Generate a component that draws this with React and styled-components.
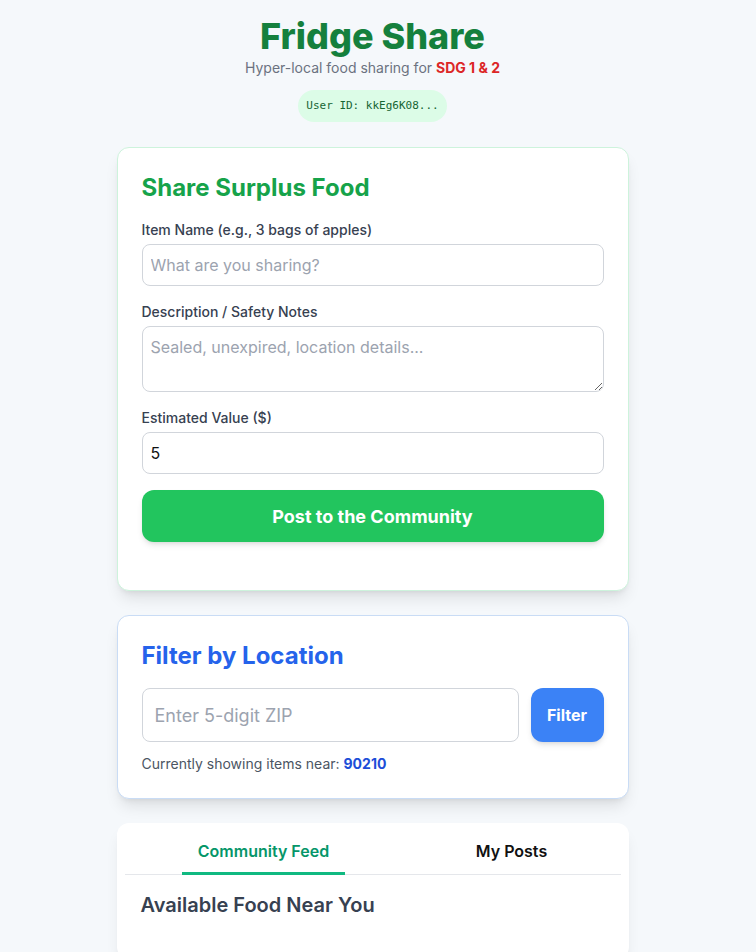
import React, { useState } from 'react';
import styled, { createGlobalStyle } from 'styled-components';

const GlobalStyle = createGlobalStyle`
    * { box-sizing: border-box; }
    body {
        margin: 0;
        background: #f5f8fb;
        font-family: Inter, 'Noto Sans', sans-serif;
        color: #1f2937;
    }
`

const App = () => {
    const [tab, setTab] = useState('feed');
    const [value, setValue] = useState('5');

    return (
    <Viewport>
        <GlobalStyle />
        <Page>
            <Header>
                <Title>Fridge Share</Title>
                <Subtitle>Hyper-local food sharing for <Sdg>SDG 1 &amp; 2</Sdg></Subtitle>
                <UserBadge>User ID: kkEg6K08...</UserBadge>
            </Header>

            <Card tone="green">
                <CardTitle color="#16a34a">Share Surplus Food</CardTitle>
                <Form onSubmit={e => e.preventDefault()}>
                    <Field>
                        <Label>Item Name (e.g., 3 bags of apples)</Label>
                        <Input placeholder="What are you sharing?" />
                    </Field>
                    <Field>
                        <Label>Description / Safety Notes</Label>
                        <TextArea rows={2} placeholder="Sealed, unexpired, location details..." />
                    </Field>
                    <Field>
                        <Label>Estimated Value ($)</Label>
                        <Input type="number" value={value} onChange={e => setValue(e.target.value)} />
                    </Field>
                    <PostButton type="submit">Post to the Community</PostButton>
                </Form>
            </Card>

            <Card tone="blue">
                <CardTitle color="#2563eb">Filter by Location</CardTitle>
                <FilterRow>
                    <ZipInput placeholder="Enter 5-digit ZIP" />
                    <FilterButton>Filter</FilterButton>
                </FilterRow>
                <NearText>Currently showing items near: <Zip>90210</Zip></NearText>
            </Card>

            <FeedCard>
                <Tabs>
                    <Tab active={tab === 'feed'} onClick={() => setTab('feed')}>Community Feed</Tab>
                    <Tab active={tab === 'mine'} onClick={() => setTab('mine')}>My Posts</Tab>
                </Tabs>
                <FeedBody>
                    <FeedTitle>Available Food Near You</FeedTitle>
                </FeedBody>
            </FeedCard>
        </Page>
    </Viewport>
    )
}

const Viewport = styled.div`
    padding-right: 11px;
`

const Page = styled.div`
    max-width: 512px;
    margin: 0 auto;
    padding: 16px 0 40px;
    display: flex;
    flex-direction: column;
    gap: 24px;
`

const Header = styled.header`
    display: flex;
    flex-direction: column;
    align-items: center;
    margin-bottom: 1px;
`

const Title = styled.h1`
    margin: 0;
    font-size: 36px;
    line-height: 40px;
    font-weight: 800;
    color: #15803d;
`

const Subtitle = styled.p`
    margin: 2px 0 0;
    font-size: 14px;
    line-height: 20px;
    color: #6b7280;
`

const Sdg = styled.span`
    color: #dc2626;
    font-weight: 700;
`

const UserBadge = styled.div`
    margin-top: 12px;
    padding: 8px 8px;
    border-radius: 9999px;
    background: #dcfce7;
    color: #166534;
    font-family: 'DejaVu Sans Mono', 'Liberation Mono', monospace;
    font-size: 11px;
    line-height: 16px;
`

const Card = styled.section`
    background: #fff;
    border-radius: 12px;
    border: 1px solid ${p => p.tone === 'blue' ? '#c9dcf5' : '#cdf3dc'};
    box-shadow: 0 10px 15px -3px rgba(0,0,0,0.1), 0 4px 6px -4px rgba(0,0,0,0.1);
    padding: 24px 24px ${p => p.tone === 'blue' ? '24px' : '48px'};
`

const CardTitle = styled.h2`
    margin: 0 0 16px;
    font-size: 24px;
    line-height: 32px;
    font-weight: 700;
    color: ${p => p.color};
`

const Form = styled.form`
    display: flex;
    flex-direction: column;
    gap: 16px;
`

const Field = styled.div`
    display: flex;
    flex-direction: column;
    gap: 4px;
`

const Label = styled.label`
    font-size: 14px;
    line-height: 20px;
    font-weight: 500;
    color: #374151;
`

const Input = styled.input`
    width: 100%;
    height: 42px;
    padding: 8px;
    border: 1px solid #d1d5db;
    border-radius: 8px;
    font-family: inherit;
    font-size: 16px;
    color: #111;
    outline: none;
    &::placeholder { color: #9ca3af; }
    &::-webkit-inner-spin-button { -webkit-appearance: none; }
`

const TextArea = styled.textarea`
    width: 100%;
    height: 66px;
    padding: 8px;
    border: 1px solid #d1d5db;
    border-radius: 8px;
    font-family: inherit;
    font-size: 16px;
    line-height: 24px;
    outline: none;
    &::placeholder { color: #9ca3af; }
`

const PostButton = styled.button`
    height: 52px;
    border: none;
    border-radius: 12px;
    background: #22c55e;
    color: #fff;
    font-family: inherit;
    font-size: 18px;
    font-weight: 700;
    box-shadow: 0 4px 6px -1px rgba(0,0,0,0.1), 0 2px 4px -2px rgba(0,0,0,0.1);
    cursor: pointer;
`

const FilterRow = styled.div`
    display: flex;
    gap: 12px;
`

const ZipInput = styled.input`
    flex: 1;
    height: 54px;
    padding: 12px;
    border: 1px solid #d1d5db;
    border-radius: 8px;
    font-family: inherit;
    font-size: 18px;
    outline: none;
    &::placeholder { color: #9ca3af; }
`

const FilterButton = styled.button`
    width: 73px;
    border: none;
    border-radius: 12px;
    background: #3b82f6;
    color: #fff;
    font-family: inherit;
    font-size: 16px;
    font-weight: 700;
    box-shadow: 0 4px 6px -1px rgba(0,0,0,0.1), 0 2px 4px -2px rgba(0,0,0,0.1);
    cursor: pointer;
`

const NearText = styled.p`
    margin: 12px 0 0;
    font-size: 14px;
    line-height: 20px;
    color: #4b5563;
`

const Zip = styled.span`
    color: #1d4ed8;
    font-weight: 700;
`

const FeedCard = styled.section`
    background: #fff;
    border-radius: 12px;
    box-shadow: 0 10px 15px -3px rgba(0,0,0,0.08), 0 4px 6px -4px rgba(0,0,0,0.08);
    padding: 8px 8px 40px;
`

const Tabs = styled.div`
    display: flex;
    justify-content: space-around;
    border-bottom: 1px solid #e5e7eb;
`

const Tab = styled.button`
    padding: 8px 16px 9px;
    border: none;
    border-bottom: 3px solid ${p => p.active ? '#10b981' : 'transparent'};
    margin-bottom: -1px;
    background: none;
    font-family: inherit;
    font-size: 16px;
    line-height: 24px;
    font-weight: 600;
    color: ${p => p.active ? '#059669' : '#111'};
    cursor: pointer;
`

const FeedBody = styled.div`
    padding: 16px 16px 0;
`

const FeedTitle = styled.h3`
    margin: 0;
    font-size: 20px;
    line-height: 28px;
    font-weight: 600;
    color: #374151;
`

export default App;
